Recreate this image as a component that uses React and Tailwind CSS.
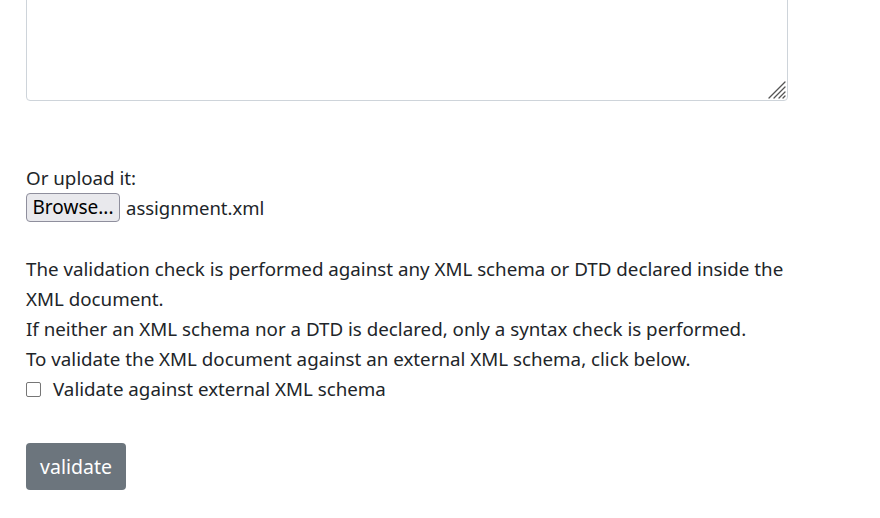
import React, { useState } from "react";

const App = () => {
  const [external, setExternal] = useState(false);

  return (
    <div className="min-h-screen bg-white text-[#212529] overflow-hidden" style={{ fontFamily: '"Noto Sans", "Open Sans", sans-serif' }}>
      <div className="pl-[26px] w-[788px]">
        <div className="relative w-[762px]">
          <textarea
            className="block w-[762px] h-[122px] -mt-[21px] border border-[#ced4da] rounded-[4px] resize-none focus:outline-none"
            defaultValue=""
          />
          <svg className="absolute right-[2px] bottom-[2px] pointer-events-none" width="18" height="18" viewBox="0 0 18 18">
            <g stroke="#555" strokeWidth="1.3" strokeLinecap="round">
              <line x1="1" y1="17" x2="17" y2="1" />
              <line x1="6" y1="17" x2="17" y2="6" />
              <line x1="11" y1="17" x2="17" y2="11" />
              <line x1="15" y1="17" x2="17" y2="15" />
            </g>
          </svg>
        </div>

        <div className="mt-[62px] text-[18.75px] leading-[30px]">Or upload it:</div>
        <div className="flex items-center gap-[6px] h-[29px]">
          <button className="h-[29px] w-[94px] bg-[#e9e9ed] border border-[#8f8f9d] rounded-[4px] text-[19px] leading-none text-black">
            Browse...
          </button>
          <span className="text-[18.5px]">assignment.xml</span>
        </div>

        <div className="mt-[32px] text-[18.75px] leading-[30px]">
          <p>
            The validation check is performed against any XML schema or DTD declared inside the XML document.
          </p>
          <p>If neither an XML schema nor a DTD is declared, only a syntax check is performed.</p>
          <p>To validate the XML document against an external XML schema, click below.</p>
          <label className="flex items-center gap-[12px] cursor-pointer">
            <input
              type="checkbox"
              checked={external}
              onChange={(e) => setExternal(e.target.checked)}
              className="appearance-none w-[15px] h-[15px] border border-[#767676] rounded-[2px] bg-white checked:bg-[#0d6efd]"
            />
            Validate against external XML schema
          </label>
        </div>

        <button className="mt-[39px] h-[47px] w-[100px] bg-[#6c757d] text-white text-[19.5px] rounded-[4px]">
          validate
        </button>
      </div>
    </div>
  );
};

export default App;
